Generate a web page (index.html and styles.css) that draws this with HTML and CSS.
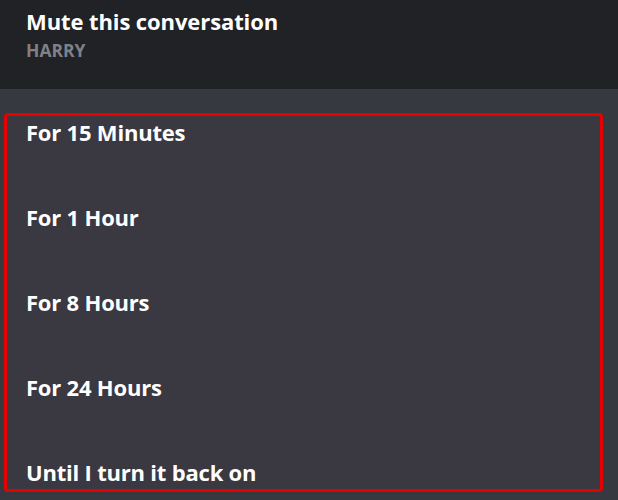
FILE: index.html
```html
<!DOCTYPE html>
<html>
<head>
<meta charset="utf-8">
<link rel="stylesheet" href="styles.css">
</head>
<body>
<header class="header">
  <div class="title">Mute this conversation</div>
  <div class="subtitle">HARRY</div>
</header>
<main class="content">
  <ul class="options">
    <li class="option">For 15 Minutes</li>
    <li class="option">For 1 Hour</li>
    <li class="option">For 8 Hours</li>
    <li class="option">For 24 Hours</li>
    <li class="option">Until I turn it back on</li>
  </ul>
</main>
</body>
</html>
```
FILE: styles.css
```css
html, body {
  margin: 0;
  padding: 0;
  background: #36393f;
  font-family: "Open Sans", "Noto Sans", sans-serif;
  color: #ffffff;
  height: 500px;
  overflow: hidden;
}
.header {
  background: #202225;
  height: 89px;
  box-sizing: border-box;
  padding: 6px 0 0 26px;
}
.title {
  font-size: 22px;
  font-weight: 700;
  line-height: 30px;
  letter-spacing: -0.1px;
}
.subtitle {
  font-size: 17.5px;
  font-weight: 700;
  color: #7f8186;
  line-height: 24px;
  margin-top: 2px;
}
.content {
  padding: 24px 0 0 4px;
}
.options {
  list-style: none;
  margin: 0;
  width: 599px;
  height: 379px;
  box-sizing: border-box;
  border: 3px solid #e60000;
  border-radius: 4px;
  background: #3a3840;
  padding: 1px 0 0 19px;
  display: flex;
  flex-direction: column;
  gap: 55px;
}
.option {
  font-size: 22px;
  font-weight: 700;
  line-height: 30px;
  letter-spacing: -0.2px;
}
```
